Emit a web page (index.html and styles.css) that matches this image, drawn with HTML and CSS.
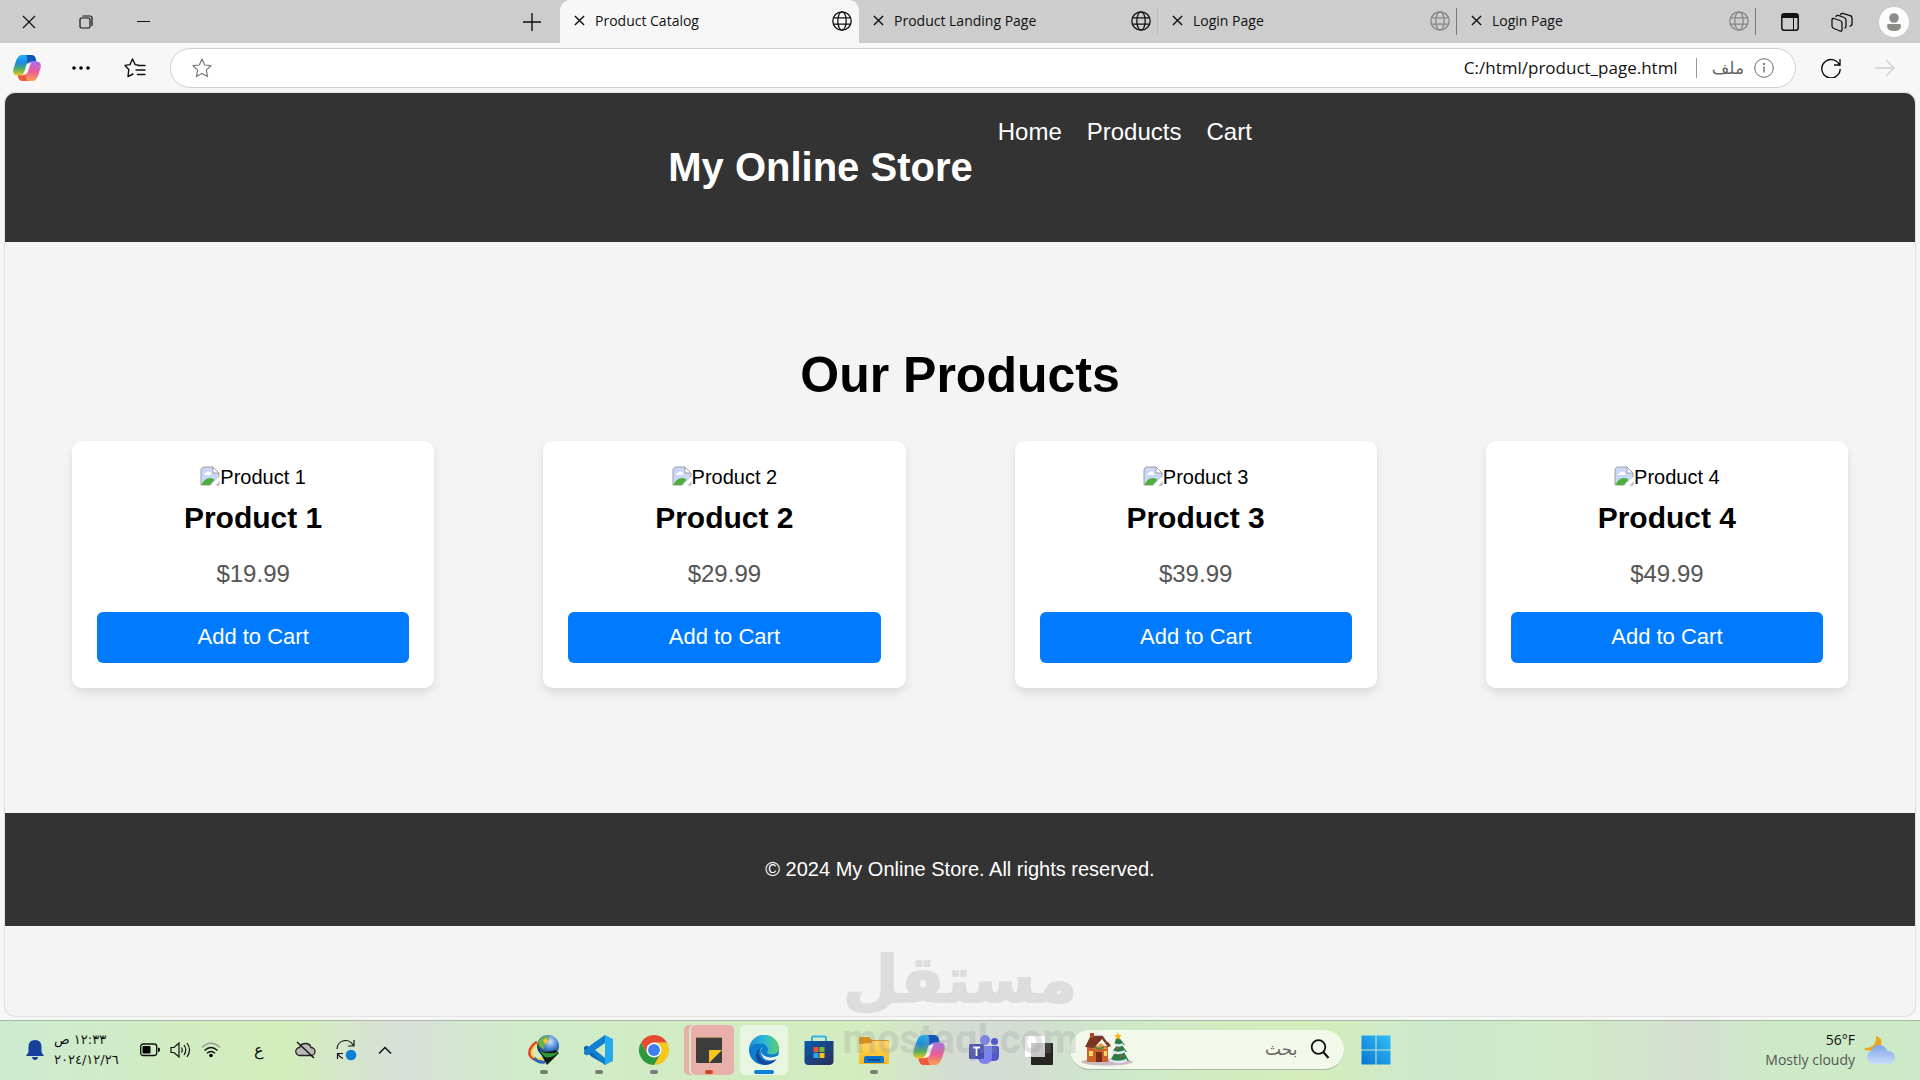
FILE: index.html
```html
<!DOCTYPE html>
<html lang="en">
	<head>
		<meta charset="utf-8">
		<title>Product Catalog</title>
		<link rel="stylesheet" href="styles.css">
	</head>
	<body>
		<!-- shared icons -->
		<svg class="defs" width="0" height="0">
			<defs>
				<linearGradient id="cpBlue" x1="0" y1="0" x2="0" y2="1">
					<stop offset="0" stop-color="#18b4f0"/>
					<stop offset=".4" stop-color="#2088dc"/>
					<stop offset=".7" stop-color="#55b05a"/>
					<stop offset="1" stop-color="#f6c81e"/>
				</linearGradient>
				<linearGradient id="cpPink" x1="0" y1="0" x2="0" y2="1">
					<stop offset="0" stop-color="#a970ee"/>
					<stop offset=".5" stop-color="#ea5a9c"/>
					<stop offset="1" stop-color="#f7a24e"/>
				</linearGradient>
				<linearGradient id="edgeTop" x1="0" y1="0" x2="1" y2="0">
					<stop offset="0" stop-color="#1f8fd8"/>
					<stop offset=".5" stop-color="#2cb8dc"/>
					<stop offset="1" stop-color="#5fd068"/>
				</linearGradient>
				<linearGradient id="store" x1="0" y1="0" x2="1" y2="1">
					<stop offset="0" stop-color="#0a5cb0"/>
					<stop offset="1" stop-color="#2a2c54"/>
				</linearGradient>
				<linearGradient id="folder" x1="0" y1="0" x2="0" y2="1">
					<stop offset="0" stop-color="#ffd868"/>
					<stop offset="1" stop-color="#f5bb1c"/>
				</linearGradient>
				<linearGradient id="win" x1="1" y1="0" x2="0" y2="1">
					<stop offset="0" stop-color="#35bdf8"/>
					<stop offset="1" stop-color="#0576d3"/>
				</linearGradient>
				<linearGradient id="cloud" x1="0" y1="0" x2="0" y2="1">
					<stop offset="0" stop-color="#7fa5ea"/>
					<stop offset="1" stop-color="#c9dcfa"/>
				</linearGradient>
				<radialGradient id="ball" cx=".6" cy=".3" r=".7">
					<stop offset="0" stop-color="#cfe6ff"/>
					<stop offset=".5" stop-color="#3f7fd0"/>
					<stop offset="1" stop-color="#16264a"/>
				</radialGradient>
				<symbol id="globe" viewBox="0 0 20 20">
					<g fill="none" stroke="currentColor" stroke-width="1.3">
						<circle cx="10" cy="10" r="9.2"/>
						<ellipse cx="10" cy="10" rx="4.2" ry="9.2"/>
						<path d="M1.5 6.8h17M1.5 13.2h17"/>
					</g>
				</symbol>
				<symbol id="close" viewBox="0 0 12 12">
					<path d="M1 1l10 10M11 1L1 11" fill="none" stroke="currentColor" stroke-width="1.5"/>
				</symbol>
				<symbol id="copilot" viewBox="0 0 30 30">
					<path d="M9 1h11q3 0 4 3l1 4h-5q-3 0-4 3l-3 9q-1 3-4 3H5q-6 0-4.500-7l2.500-8Q5.500 1 9 1z" fill="url(#cpBlue)"/>
					<path d="M14 1h6q3 0 4 3l1 4h-5q-3 0-4 3l-1 2q1-9-1-12z" fill="#1554b8"/>
					<path d="M21 29H10q-3 0-4-3l-1-3h5q3 0 4-3l3-9q1-3 4-3h4q6 0 4.500 7l-2.500 8q-2.500 6-6 6z" fill="url(#cpPink)"/>
					<path d="M16 29h-6q-3 0-4-3l-1-3h5q3 0 4-3-1 6 2 9z" fill="#ee5b3a"/>
					<path d="M16 10h4q-1 0-2 3l-2 6q-1 3-3 3H9.500q2-1 3-4l1-4q1-4 2.500-4z" fill="#fff" fill-opacity=".85"/>
				</symbol>
				<symbol id="broken" viewBox="0 0 20 20">
					<path d="M1 3l2-2h10l6 6v12H1z" fill="#c9d8f8" stroke="#a0a0a0"/>
					<path d="M13 1v6h6z" fill="#fff" stroke="#a0a0a0"/>
					<path d="M4 9q0-2 2-2 1-3 4-1 2 1 1 3z" fill="#fff"/>
					<path d="M1.500 19q3-7 8-7 4 0 5 2l-5 5z" fill="#4fae3b"/>
					<path d="M10 20l9-9h1v4l-5 5z" fill="#fff"/>
				</symbol>
			</defs>
		</svg>

		<!-- tab strip -->
		<div class="tabBar">
			<button class="winBtn" aria-label="Close"><svg width="14" height="14" viewBox="0 0 14 14"><path d="M1 1l12 12M13 1L1 13" fill="none" stroke="#111" stroke-width="1.200"/></svg></button>
			<button class="winBtn" aria-label="Restore"><svg width="14" height="14" viewBox="0 0 14 14"><g fill="none" stroke="#111" stroke-width="1.200"><rect x="1" y="3" width="10" height="10" rx="1.500"/><path d="M3.500 1H11q2 0 2 2v8"/></g></svg></button>
			<button class="winBtn" aria-label="Minimize"><svg width="14" height="14" viewBox="0 0 14 14"><path d="M1 6.500h13" stroke="#111"/></svg></button>
			<button class="winBtn newTab" aria-label="New tab"><svg width="18" height="18" viewBox="0 0 18 18"><path d="M9 0v18M0 9h18" stroke="#111" stroke-width="1.400"/></svg></button>
			<div class="tab active">
				<button aria-label="Close tab"><svg width="11" height="11"><use href="#close"/></svg></button>
				<span>Product Catalog</span>
				<svg class="globe" width="20" height="20"><use href="#globe"/></svg>
			</div>
			<div class="tab faint">
				<button aria-label="Close tab"><svg width="11" height="11"><use href="#close"/></svg></button>
				<span>Product Landing Page</span>
				<svg class="globe" width="20" height="20"><use href="#globe"/></svg>
			</div>
			<div class="tab idle">
				<button aria-label="Close tab"><svg width="11" height="11"><use href="#close"/></svg></button>
				<span>Login Page</span>
				<svg class="globe" width="20" height="20"><use href="#globe"/></svg>
			</div>
			<div class="tab idle">
				<button aria-label="Close tab"><svg width="11" height="11"><use href="#close"/></svg></button>
				<span>Login Page</span>
				<svg class="globe" width="20" height="20"><use href="#globe"/></svg>
			</div>
			<div class="tabTools">
				<button aria-label="Tab actions"><svg width="18" height="18" viewBox="0 0 18 18"><rect x=".8" y=".8" width="16.400" height="16.400" rx="2.500" fill="none" stroke="#111" stroke-width="1.500"/><path d="M1 2q0-1 2-1h12q2 0 2 1v3H1z" fill="#111"/><path d="M12.500 5v12" stroke="#111"/></svg></button>
				<button aria-label="Workspaces"><svg width="22" height="20" viewBox="0 0 22 20"><g fill="none" stroke="#111" stroke-width="1.300"><path d="M3 6.500l6 2q2 .6 2 2.500v6.500q0 2-2 1.500l-6-2.500q-2-.7-2-2.500V8q0-2 2-1.500z"/><path d="M5 5q0-2 2.500-1.500L13 5.500q2 .7 2 2.500v6q0 2-1.500 2.500"/><path d="M9.500 3q.5-2 2.500-1.500L19 3.500q2 .5 2 2.500v6q0 2-2.500 2.300"/></g></svg></button>
				<button aria-label="Profile"><svg width="30" height="30" viewBox="0 0 30 30"><circle cx="15" cy="15" r="15" fill="#fcfcfc"/><circle cx="15" cy="11" r="4.800" fill="#8a8d88"/><path d="M8 18.500q0-1.500 1.500-1.500h11q1.500 0 1.500 1.500 0 5.500-7 5.500t-7-5.500z" fill="#8a8d88"/></svg></button>
			</div>
		</div>

		<!-- address row -->
		<div class="toolBar">
			<button class="toolBtn" aria-label="Copilot"><svg width="28" height="28"><use href="#copilot"/></svg></button>
			<button class="toolBtn dots" aria-label="Settings and more"><svg width="18" height="6" viewBox="0 0 18 6"><circle cx="2" cy="3" r="1.800"/><circle cx="9" cy="3" r="1.800"/><circle cx="16" cy="3" r="1.800"/></svg></button>
			<button class="toolBtn" aria-label="Favorites"><svg width="22" height="20" viewBox="0 0 22 20"><path d="M14 7l-2.800-.4L8.500 1 6 6.600 1 7.400l3.800 4L4 18.500l5-2.500M14 7.500h7M12 12h9M13.500 16.500H21" fill="none" stroke="#111" stroke-width="1.400" stroke-linejoin="round" stroke-linecap="round"/></svg></button>
			<div class="address">
				<svg width="20" height="20" viewBox="0 0 20 20"><path d="M10 1l2.700 6 6.300.7-4.700 4.400 1.300 6.500L10 15.400l-5.600 3.200 1.300-6.500L1 7.700 7.300 7z" fill="none" stroke="#777" stroke-width="1.200" stroke-linejoin="round"/></svg>
				<input type="text" value="C:/html/product_page.html" aria-label="Address">
				<i class="bar"></i>
				<span class="fileLabel" lang="ar">ملف</span>
				<svg width="20" height="20" viewBox="0 0 20 20"><circle cx="10" cy="10" r="9.300" fill="none" stroke="#666"/><path d="M10 8.500v6" stroke="#555" stroke-width="1.200"/><circle cx="10" cy="6" r="1" fill="#555"/></svg>
			</div>
			<button class="toolBtn" aria-label="Refresh"><svg width="20" height="20" viewBox="0 0 20 20"><path d="M18.800 8A9.200 9.200 0 1 0 19.200 11M19 1v6h-6" fill="none" stroke="#111" stroke-width="1.400"/></svg></button>
			<button class="toolBtn" aria-label="Forward"><svg width="20" height="18" viewBox="0 0 20 18"><path d="M0 9h19M11 1l8 8-8 8" fill="none" stroke="#d0d0d0" stroke-width="1.300"/></svg></button>
		</div>

		<!-- store page -->
		<div class="page">
			<header>
				<h1>My Online Store</h1>
				<ul class="nav">
					<li><a href="#">Home</a></li>
					<li><a href="#">Products</a></li>
					<li><a href="#">Cart</a></li>
				</ul>
			</header>
			<main>
				<h2>Our Products</h2>
				<div class="products">
					<div class="card">
						<div class="pic"><svg width="20" height="20"><use href="#broken"/></svg>Product 1</div>
						<h3>Product 1</h3>
						<p>$19.99</p>
						<button>Add to Cart</button>
					</div>
					<div class="card">
						<div class="pic"><svg width="20" height="20"><use href="#broken"/></svg>Product 2</div>
						<h3>Product 2</h3>
						<p>$29.99</p>
						<button>Add to Cart</button>
					</div>
					<div class="card">
						<div class="pic"><svg width="20" height="20"><use href="#broken"/></svg>Product 3</div>
						<h3>Product 3</h3>
						<p>$39.99</p>
						<button>Add to Cart</button>
					</div>
					<div class="card">
						<div class="pic"><svg width="20" height="20"><use href="#broken"/></svg>Product 4</div>
						<h3>Product 4</h3>
						<p>$49.99</p>
						<button>Add to Cart</button>
					</div>
				</div>
			</main>
			<footer>© 2024 My Online Store. All rights reserved.</footer>
		</div>

		<!-- taskbar -->
		<div class="taskBar">
			<div class="tray">
				<svg width="18" height="20" viewBox="0 0 18 20"><path d="M9 0q6.500 0 6.500 7v5l2.500 4H0l2.500-4V7Q2.500 0 9 0z" fill="#173f9c"/><path d="M6 17h6q-.5 3-3 3t-3-3z" fill="#173f9c"/></svg>
				<div class="clock" lang="ar">
					<div>١٢:٣٣ ص</div>
					<div>٢٠٢٤/١٢/٢٦</div>
				</div>
				<div class="status">
					<svg width="20" height="14" viewBox="0 0 20 14"><rect x=".7" y="1" width="16" height="11.500" rx="2.500" fill="none" stroke="#111" stroke-width="1.300"/><rect x="2.500" y="3" width="8" height="7.500" rx="1"/><path d="M18 4.500q2 0 2 2.200T18 9z"/></svg>
					<svg width="21" height="16" viewBox="0 0 21 16"><g fill="none" stroke="#111" stroke-width="1.200"><path d="M1 5.500h3L9 1v14l-5-4.500H1z"/><path d="M11.500 5.500q1.500 2.500 0 5M14 3q3.500 5 0 10M17 1q5 7 0 14"/></g></svg>
					<svg width="20" height="16" viewBox="0 0 20 16"><g fill="none" stroke="#111" stroke-width="1.300"><path d="M1 5.500q9-8.500 18 0" stroke="#999"/><path d="M3.500 8.500q6.500-6 13 0M6 11.300q4-3.600 8 0"/></g><circle cx="10" cy="13.500" r="1.800"/></svg>
				</div>
				<span class="lang" lang="ar">ع</span>
				<svg class="trayCloud" width="21" height="18" viewBox="0 0 21 18"><path d="M5 14.500a4 4 0 0 1-.5-8Q6 2.500 10.500 2.500T16 6.500a4 4 0 0 1 0 8z" fill="#b9b9b9" stroke="#222" stroke-width="1.300"/><path d="M2 1l17 16" stroke="#111" stroke-width="1.400"/></svg>
				<svg width="22" height="22" viewBox="0 0 22 22"><g fill="none" stroke="#111" stroke-width="1.200"><path d="M2 10a8.500 8.500 0 0 1 16-4M19 1v6h-6M8 19.500A8.500 8.500 0 0 1 3 15M2.500 20v-5.500H8"/></g><circle cx="16" cy="16" r="5.300" fill="#0a7fd6"/></svg>
				<svg class="chevron" width="14" height="8" viewBox="0 0 14 8"><path d="M1 7.500l6-6 6 6" fill="none" stroke="#111" stroke-width="1.500"/></svg>
			</div>

			<div class="apps">
				<button class="app open" aria-label="Download manager"><svg width="32" height="32" viewBox="0 0 32 32"><circle cx="20" cy="12" r="11" fill="url(#ball)"/><path d="M10 8q4-7 10-6 2 3-1 6t-3 7q-5 0-6-7z" fill="#6db14a"/><path d="M15 6l4-2 1 4-3 2z" fill="#f2c33b"/><path d="M9 8Q0 14 2 21q3 6 12 5" fill="none" stroke="#e0462d" stroke-width="3"/><path d="M9 10q-7 6-5 11 3 5 11 4" fill="none" stroke="#f7d33c" stroke-width="2"/><path d="M6 24q4 5 11 4" fill="none" stroke="#2a67b8" stroke-width="3"/><path d="M12 18q10 0 15-2l4 3-12 12-4-7z" fill="#111c14"/><path d="M11 17q8 4 20 1-7 7-14 5z" fill="#2b9a3a"/></svg></button>
				<button class="app open" aria-label="Code editor"><svg width="32" height="32" viewBox="0 0 32 32"><path d="M22 2L8 14.500 4 11.500 1 13v3l8 7 14 8z" fill="#0a66b8"/><path d="M22 31L8 18.500 4 21.500 1 20v-3l8-7L22 1v8L12 16l10 8z" fill="#1180cf"/><path d="M22 9v15l-10-8z" fill="#d2ecc2"/><path d="M22 1l8 4v22l-8 4z" fill="#27a9ee"/></svg></button>
				<button class="app open" aria-label="Chrome"><svg width="32" height="32" viewBox="0 0 32 32"><path d="M16 16V8.500h13A15 15 0 0 1 16 31l-2-2z" fill="#f6c51e"/><path d="M16 16L9.500 19.800 3 8.500A15 15 0 0 0 16 31l6.500-11.200z" fill="#2b9a3f"/><path d="M3 8.500L9.500 19.800 9 12l7-3.500h13A15 15 0 0 0 3 8.500z" fill="#e64a33"/><circle cx="16" cy="16" r="7.500" fill="#fff"/><circle cx="16" cy="16" r="6" fill="#3c82ee"/></svg></button>
				<button class="app open notes" aria-label="Sticky notes"><svg width="32" height="32" viewBox="0 0 32 32"><rect x="3" y="3" width="26" height="26" rx="1" fill="#3c3c3c"/><path d="M3 3.500h26" stroke="#b08a5a"/><path d="M16 16h13L16 29z" fill="#f6c51e"/></svg></button>
				<button class="app open current" aria-label="Edge"><svg width="32" height="32" viewBox="0 0 32 32"><circle cx="16" cy="16" r="15" fill="#0f7dce"/><path d="M1.500 14C3 5 9 1 16 1c9 0 15 6.500 15 13 0 4-3 6.500-7 6.500-3 0-5-1-5-2 0-1 1-1 1-3 0-3-3-6-8-6-5 0-9 2-10.500 4.500z" fill="url(#edgeTop)"/><path d="M12 14q-2 3-1 7 2 6 9 6.500 5 0 9-3-4 6.500-12 6.500-8-1-9-8-.5-6 4-9z" fill="#13489c"/><path d="M14 13q-2 2-1 5 2 5 9 5.500 4 0 8-2v3q-9 4-14 0-5-5-2-11.500z" fill="#e8f5e0"/></svg></button>
				<button class="app" aria-label="Store"><svg width="32" height="32" viewBox="0 0 32 32"><path d="M9 8V4q0-1.500 1.500-1.500h11Q23 2.500 23 4v4" fill="none" stroke="#2eb4ea" stroke-width="2"/><path d="M1.500 7h29v20q0 4-4 4h-21q-4 0-4-4z" fill="url(#store)"/><path d="M10.500 13h5v5h-5z" fill="#ee5035"/><path d="M16.500 13h5v5h-5z" fill="#7ab82f"/><path d="M10.500 19h5v5h-5z" fill="#29a8ea"/><path d="M16.500 19h5v5h-5z" fill="#fcbf1e"/></svg></button>
				<button class="app open" aria-label="File explorer"><svg width="32" height="32" viewBox="0 0 32 32"><path d="M1 5q0-2 2-2h8l3 3h15q2 0 2 2v4H1z" fill="#d98e17"/><path d="M1 10l12-1 2-2h14q2 0 2 2v20q0 1-2 1H3q-2 0-2-1z" fill="url(#folder)"/><path d="M6 29v-5q0-2 2-2h16q2 0 2 2v5z" fill="#0b74c8"/><path d="M10 26h12" stroke="#0a4d92" stroke-width="2"/></svg></button>
				<button class="app" aria-label="Copilot"><svg width="32" height="32"><use href="#copilot"/></svg></button>
				<button class="app" aria-label="Teams"><svg width="32" height="32" viewBox="0 0 32 32"><circle cx="17" cy="6" r="5" fill="#7b83eb"/><circle cx="26.500" cy="7.500" r="3.500" fill="#5059c9"/><path d="M21 12h8q2 0 2 2v8q0 5-5 5h-5z" fill="#5059c9"/><path d="M10 12h14v11q0 7-7 7t-7-7z" fill="#7b83eb"/><rect x="1" y="10" width="15" height="15" rx="1.500" fill="#4650b4"/><path d="M5 13.500h7M8.500 13.500V22" stroke="#fff" stroke-width="1.800"/></svg></button>
				<button class="app" aria-label="Task view"><svg width="32" height="32" viewBox="0 0 32 32"><rect x="2" y="2" width="20" height="21" rx="1" fill="#fff"/><rect x="8" y="9" width="22" height="22" rx="1" fill="#262523"/><path d="M8 9h14v14H8z" fill="#c6c6c6"/></svg></button>
				<div class="search">
					<svg width="54" height="34" viewBox="0 0 54 34"><ellipse cx="27" cy="30" rx="26" ry="3.500" fill="#cbb9c4"/><path d="M7 14h21v16H7z" fill="#c8642a"/><path d="M5 15L11 3h12l8 11-3 1-6-8-8 9z" fill="#7c3520"/><path d="M11 3h12l5 7" fill="none" stroke="#e9eef8" stroke-width="1.500"/><path d="M10 1h4v5h-4z" fill="#a8482a"/><path d="M13 17l8-6 7 6z" fill="#e7984a"/><path d="M16 20h6v10h-6z" fill="#7a2a18"/><path d="M9 19h4v5H9zM24 19h3v5h-3z" fill="#ffd76a"/><path d="M14 15q5 3 10 0" fill="none" stroke="#3f8a3c" stroke-width="1.500"/><path d="M37 3l8 10h-3l5 7h-3l5 9H30l5-9h-3l5-7h-3z" fill="#2f7d46"/><path d="M34 12q5 3 9 0M32 19q6 4 13 0M30 28q8 4 17 0" fill="none" stroke="#dfe9f8" stroke-width="2.500"/><path d="M38 0l1.200 3H42l-2.200 2 .8 3L38 6.300 35.400 8l.8-3L34 3h2.800z" fill="#f5b921"/><circle cx="37" cy="16" r="1" fill="#e63c2c"/><circle cx="41" cy="24" r="1" fill="#e63c2c"/></svg>
					<input type="text" placeholder="بحث" aria-label="Search" dir="rtl">
					<svg width="20" height="20" viewBox="0 0 20 20"><circle cx="8.500" cy="8" r="6.800" fill="none" stroke="#111" stroke-width="1.800"/><path d="M13.300 13l5.200 6" stroke="#111" stroke-width="2.200"/></svg>
				</div>
				<button class="app" aria-label="Start"><svg width="32" height="32" viewBox="0 0 32 32"><path d="M1.500 1.500h14v14h-14zM16.500 1.500h14v14h-14zM1.500 16.500h14v14h-14zM16.500 16.500h14v14h-14z" fill="url(#win)"/></svg></button>
			</div>

			<div class="weather">
				<div class="weatherText">
					<div>56°F</div>
					<div class="sky">Mostly cloudy</div>
				</div>
				<svg width="32" height="30" viewBox="0 0 32 30"><path d="M12 1q7 2 5 9-3 8-16 5l-.5-2Q13 13 12 1z" fill="#f0a418"/><path d="M8 29a7 7 0 0 1-1-13q2-6 8-6t8.500 6q7 0 7.500 6.500-.5 6.500-7 6.500z" fill="url(#cloud)"/></svg>
			</div>
		</div>

		<div class="mark">
			<div class="markLogo" lang="ar" dir="rtl">مستقل</div>
			<div class="markSite">mostaql.com</div>
		</div>
	</body>
</html>
```
FILE: styles.css
```css
*{
	padding: 0;
	margin: 0;
	box-sizing: border-box;
}
ul,li{
	list-style: none;
}
a{
	text-decoration: none;
}
button,input{
	font: inherit;
	color: inherit;
	border: none;
	background: none;
	outline: none;
}
svg{
	display: block;
	flex: none;
}
.defs{
	position: absolute;
}
body{
	display: flex;
	flex-direction: column;
	min-height: 100vh;
	background-color: #f7f7f7;
	font-family: "Open Sans", "Noto Sans", "DejaVu Sans", sans-serif;
	color: #111;
}

/* tab strip */
.tabBar{
	display: flex;
	height: 43px;
	background-color: #cdcdcd;
}
.winBtn{
	display: flex;
	align-items: center;
	justify-content: center;
	width: 57px;
}
.newTab{
	margin-left: auto;
}
.tab{
	display: flex;
	align-items: center;
	gap: 10px;
	width: 299px;
	padding: 0 6px 2px 14px;
	font-size: 14px;
	border-right: 1px solid transparent;
}
.tab .globe{
	margin-left: auto;
}
.tab.active{
	background-color: #f7f7f7;
	border-radius: 10px 10px 0 0;
}
.tab.faint{
	border-image: linear-gradient(transparent 20%, #bdbdbd 20%, #bdbdbd 80%, transparent 80%) 1;
}
.tab.idle{
	border-image: linear-gradient(transparent 20%, #7c7a74 20%, #7c7a74 80%, transparent 80%) 1;
}
.tab.idle .globe{
	color: #858585;
}
.tabTools{
	display: flex;
	padding-left: 8px;
}
.tabTools button{
	display: flex;
	align-items: center;
	justify-content: center;
	width: 52px;
}

/* address row */
.toolBar{
	display: flex;
	align-items: center;
	height: 50px;
	padding-right: 8px;
}
.toolBtn{
	display: flex;
	align-items: center;
	justify-content: center;
	width: 54px;
}
.address{
	display: flex;
	align-items: center;
	flex: 1;
	height: 40px;
	margin: 0 8px;
	padding: 0 21px;
	background-color: #fff;
	border: 1px solid #cfcfcf;
	border-radius: 20px;
}
.address input{
	flex: 1;
	padding-bottom: 2px;
	font-size: 17px;
	text-align: right;
}
.address .bar{
	width: 1px;
	height: 20px;
	margin: 0 15px 0 18px;
	background-color: #999;
}
.fileLabel{
	margin-right: 10px;
	font-family: "DejaVu Sans", sans-serif;
	font-size: 17px;
	color: #666;
}

/* store page */
.page{
	flex: 1;
	margin: 0 5px 4px;
	background-color: #f4f4f4;
	border-radius: 10px;
	box-shadow: 0 0 2px #aaa;
	overflow: hidden;
	font-family: Arial, "Liberation Sans", sans-serif;
	font-size: 20px;
	line-height: 23px;
	color: #000;
}
header{
	display: flex;
	justify-content: center;
	gap: 25px;
	padding: 25px;
	background-color: #333;
	color: #fff;
}
header h1{
	margin: 26px 0 27px;
	font-size: 40px;
	line-height: 46px;
}
.nav{
	display: flex;
	gap: 25px;
}
.nav a{
	font-size: 24px;
	line-height: 27px;
	color: #fff;
}
main{
	padding: 105px 67px 125px;
}
main h2{
	margin-bottom: 37px;
	font-size: 50px;
	line-height: 57px;
	text-align: center;
}
.products{
	display: grid;
	grid-template-columns: repeat(4, 1fr);
	gap: 109px;
}
.card{
	padding: 25px;
	background-color: #fff;
	border-radius: 10px;
	box-shadow: 0 5px 10px rgba(0, 0, 0, .1);
	text-align: center;
}
.pic{
	display: flex;
	justify-content: center;
}
.card h3{
	margin: 12px 0 25px;
	font-size: 30px;
	line-height: 34px;
}
.card p{
	margin-bottom: 25px;
	font-size: 24px;
	line-height: 27px;
	color: #555;
}
.card button{
	display: block;
	width: 100%;
	padding: 12px 0 14px;
	font-size: 22px;
	line-height: 25px;
	color: #fff;
	background-color: #007bff;
	border-radius: 6px;
}
footer{
	padding: 45px;
	background-color: #333;
	color: #fff;
	text-align: center;
}

/* taskbar */
.taskBar{
	display: grid;
	grid-template-columns: 1fr auto 1fr;
	align-items: center;
	height: 60px;
	padding-bottom: 2px;
	border-top: 1px solid #a9b8a4;
	background: linear-gradient(90deg, #cdebd0 0, #d1ecc2 9%, #d3edbb 15%, #d8dfda 21%, #d0ecc8 27%, #d3ecbf 45%, #d5dcd5 50%, #d4dcd4 53%, #cde9c9 58%, #d4edba 68%, #cce9cc 74%, #d0eac6 82%, #d5dfd2 88%, #cdeac6 92%, #cdeac8 100%);
}
.tray{
	display: flex;
	align-items: center;
	padding-left: 26px;
}
.clock{
	width: 66px;
	margin: 0 20px 0 10px;
	font-family: "DejaVu Sans", sans-serif;
	font-size: 13px;
	line-height: 20px;
}
.clock div{
	text-align: left;
	direction: rtl;
	white-space: nowrap;
}
.status{
	display: flex;
	align-items: center;
	gap: 10px;
}
.lang{
	margin: 0 31px 0 33px;
	font-family: "DejaVu Sans", sans-serif;
	font-size: 16px;
}
.trayCloud{
	margin-right: 19px;
}
.chevron{
	margin-left: 21px;
}
.apps{
	display: flex;
	align-items: center;
}
.app{
	position: relative;
	display: flex;
	align-items: center;
	justify-content: center;
	width: 48px;
	height: 50px;
	margin: 0 4px 0 3px;
	border-radius: 5px;
}
.app.open::after{
	content: "";
	position: absolute;
	bottom: 1px;
	left: 20px;
	width: 8px;
	height: 4px;
	border-radius: 2px;
	background-color: #7b7b75;
}
.app.notes{
	width: 43px;
	margin: 0 3px 0 9px;
	padding-right: 6px;
	background-color: #e9afa9;
	box-shadow: -2px 0 #d1ecc4, -7px 0 #e9afa9;
}
.app.notes::after{
	left: 14px;
	background-color: #c94b1c;
}
.app.current{
	background-color: #e8f5e0;
}
.app.current::after{
	left: 14px;
	width: 20px;
	background-color: #0a7fd6;
}
.search{
	display: flex;
	align-items: center;
	width: 274px;
	height: 40px;
	margin: 0 5px 0 3px;
	padding: 0 14px 0 10px;
	border-radius: 20px;
	border-bottom: 1px solid #a9b8a4;
	background-color: #f3f9ea;
}
.search input{
	flex: 1;
	min-width: 0;
	margin-right: 12px;
	font-family: "DejaVu Sans", sans-serif;
	font-size: 17px;
}
.search input::placeholder{
	color: #666;
	opacity: 1;
}
.weather{
	display: flex;
	align-items: center;
	justify-content: flex-end;
	gap: 9px;
	padding-right: 24px;
	font-size: 14px;
	line-height: 20px;
	text-align: right;
}
.sky{
	color: #555;
}

/* watermark over the page and the taskbar */
.mark{
	position: absolute;
	left: 50%;
	bottom: 20px;
	width: 240px;
	margin-left: -120px;
	text-align: center;
	color: #969696;
	opacity: .24;
	pointer-events: none;
}
.markLogo{
	font-family: "DejaVu Sans", sans-serif;
	font-size: 64px;
	font-weight: bold;
	line-height: 80px;
	-webkit-text-stroke: 2px #969696;
}
.markSite{
	font-family: Roboto, "Liberation Sans", sans-serif;
	font-size: 40px;
	font-weight: bold;
	line-height: 40px;
}
```
